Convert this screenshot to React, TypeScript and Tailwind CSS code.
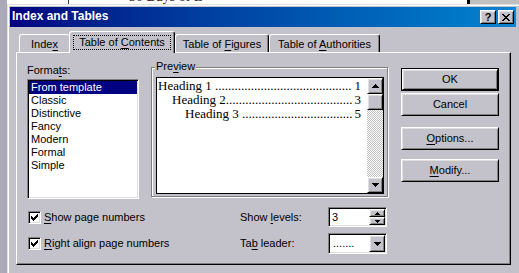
import React from "react";

const raised =
  "border border-t-white border-l-white border-r-black border-b-black shadow-[inset_1px_1px_0_#dfdfdf,inset_-1px_-1px_0_#808080]";
const sunken =
  "border border-t-[#808080] border-l-[#808080] border-b-white border-r-white shadow-[inset_1px_1px_0_#000,inset_-1px_-1px_0_#dfdfdf] p-[1px]";

function Px({ d, w, h }: { d: string; w: number; h: number }) {
  return (
    <svg width={w} height={h} viewBox={`0 0 ${w} ${h}`} shapeRendering="crispEdges" className="block">
      <path d={d} fill="#000" />
    </svg>
  );
}

const UP7 = "M3 0h1v1H3zM2 1h3v1H2zM1 2h5v1H1zM0 3h7v1H0z";
const DN7 = "M0 0h7v1H0zM1 1h5v1H1zM2 2h3v1H2zM3 3h1v1H3z";
const UP5 = "M2 0h1v1H2zM1 1h3v1H1zM0 2h5v1H0z";
const DN5 = "M0 0h5v1H0zM1 1h3v1H1zM2 2h1v1H2z";
const CHECK =
  "M6 0h1v1H6zM5 1h2v1H5zM0 2h1v1H0zM4 2h3v1H4zM0 3h2v1H0zM3 3h3v1H3zM0 4h5v1H0zM1 5h3v1H1zM2 6h1v1H2z";
const XMARK =
  "M0 0h2v1H0zM6 0h2v1H6zM1 1h2v1H1zM5 1h2v1H5zM2 2h4v1H2zM3 3h2v1H3zM2 4h4v1H2zM1 5h2v1H1zM5 5h2v1H5zM0 6h2v1H0zM6 6h2v1H6z";

function U({ children }: { children: React.ReactNode }) {
  return <span className="underline decoration-1 underline-offset-[2px]">{children}</span>;
}

function Tab({
  children,
  w,
  noRight,
}: {
  children: React.ReactNode;
  w: string;
  noRight?: boolean;
}) {
  return (
    <div
      className={`${w} h-[18px] shrink-0 flex items-center justify-center pt-[1px] rounded-t-[3px] border-t border-l border-t-white border-l-white ${
        noRight ? "" : "border-r border-r-black shadow-[inset_-1px_0_0_#808080]"
      }`}
    >
      <span className="whitespace-nowrap">{children}</span>
    </div>
  );
}

function Button({ children, def }: { children: React.ReactNode; def?: boolean }) {
  const inner = (
    <div className={`flex-1 flex items-center justify-center ${raised}`}>
      <span className="whitespace-nowrap">{children}</span>
    </div>
  );
  if (def) {
    return <div className="w-[98px] h-[23px] flex border border-black">{inner}</div>;
  }
  return <div className="w-[98px] h-[23px] flex">{inner}</div>;
}

function Checkbox() {
  return (
    <div className={`w-[13px] h-[13px] shrink-0 bg-white ${sunken} flex items-center justify-center`}>
      <Px d={CHECK} w={7} h={7} />
    </div>
  );
}

function Leader({ text, num, indent, dots }: { text: string; num: string; indent: string; dots: number }) {
  return (
    <div className={`flex justify-between h-[14px] ${indent}`}>
      <span className="whitespace-pre">{text + ".".repeat(dots)}</span>
      <span>{num}</span>
    </div>
  );
}

export default function App() {
  const formats = ["From template", "Classic", "Distinctive", "Fancy", "Modern", "Formal", "Simple"];
  return (
    <div className="w-[519px] h-[273px] overflow-hidden flex bg-[#aba8b8] font-['Liberation_Sans',Arial,sans-serif] text-[11px] leading-[13px] text-black select-none">
      <div className="w-[7px] shrink-0" />
      <div className="flex-1 flex flex-col min-w-0">
        {/* window behind */}
        <div className="h-[4px] shrink-0 bg-white flex overflow-hidden">
          <div className="w-[61px] shrink-0" />
          <div className="w-[1px] shrink-0 bg-[#404040]" />
          <div className="w-[60px] shrink-0" />
          <div className="-mt-[10px] whitespace-nowrap font-['Liberation_Serif',serif] text-[14px] leading-[14px] text-[#222]">
            30 Days of L
          </div>
          <div className="flex-1" />
          <div className="w-[3px] shrink-0 bg-black" />
          <div className="w-[49px] shrink-0 bg-[#c0c0c0]" />
        </div>

        {/* dialog */}
        <div className="flex-1 flex flex-col border-t border-l border-[#dfdfdf] bg-[#c3c1c9]">
          <div className="flex-1 flex flex-col border-t border-l border-white pt-[1px] pl-[1px] pr-[3px]">
            {/* title bar */}
            <div className="h-[20px] shrink-0 flex items-center pl-[2px] pr-[2px] bg-gradient-to-r from-[#000080] to-[#1084d0]">
              <span className="text-white font-bold text-[12px] leading-[14px] -mt-[3px]">Index and Tables</span>
              <div className="flex-1" />
              <div className={`w-[16px] h-[14px] bg-[#c3c1c9] ${raised} flex items-center justify-center`}>
                <span className="font-bold text-[11px] leading-[11px]">?</span>
              </div>
              <div className={`ml-[2px] w-[16px] h-[14px] bg-[#c3c1c9] ${raised} flex items-center justify-center`}>
                <Px d={XMARK} w={8} h={7} />
              </div>
            </div>

            {/* body */}
            <div className="mt-[4px] pl-[6px] flex flex-col">
              {/* tabs */}
              <div className="h-[21px] flex items-end pl-[3px]">
                <Tab w="w-[50px]" noRight>
                  Inde<U>x</U>
                </Tab>
                <div className="relative z-10 w-[106px] h-[22px] -mb-[1px] shrink-0 bg-[#c3c1c9] rounded-t-[3px] border-t border-l border-r border-t-white border-l-white border-r-black shadow-[inset_-1px_0_0_#808080] flex justify-center pt-[3px]">
                  <div className="w-[98px] h-[15px] border border-dotted border-black flex items-center justify-center">
                    <span className="whitespace-nowrap">
                      Table of <U>C</U>ontents
                    </span>
                  </div>
                </div>
                <Tab w="w-[94px]">
                  Table of <U>F</U>igures
                </Tab>
                <Tab w="w-[111px]">
                  Table of <U>A</U>uthorities
                </Tab>
              </div>

              {/* panel */}
              <div className="w-[495px] h-[213px] border-t border-l border-t-white border-l-white border-r border-b border-r-black border-b-black shadow-[inset_-1px_-1px_0_#808080] pl-[10px] pt-[11px] flex flex-col">
                <div className="flex items-start">
                  {/* formats */}
                  <div className="w-[112px] shrink-0 flex flex-col">
                    <div className="h-[13px] mb-[2px]">
                      <span>
                        Forma<U>t</U>s:
                      </span>
                    </div>
                    <div className={`h-[120px] bg-white ${sunken}`}>
                      {formats.map((f, i) => (
                        <div
                          key={f}
                          className={`h-[13px] pl-[2px] whitespace-nowrap ${
                            i === 0 ? "bg-[#000080] text-white" : ""
                          }`}
                        >
                          {f}
                        </div>
                      ))}
                    </div>
                  </div>

                  {/* preview */}
                  <div className="ml-[12px] mt-[3px] relative w-[237px] h-[130px] shrink-0 border border-[#808080] shadow-[1px_1px_0_#fff,inset_1px_1px_0_#fff] pl-[4px] pt-[9px]">
                    <div className="absolute left-[3px] -top-[8px] px-[1px] bg-[#c3c1c9] leading-[13px]">
                      Pre<U>v</U>iew
                    </div>
                    <div className="w-[228px] h-[117px] bg-white border border-black flex">
                      <div className="flex-1 min-w-0 pl-[1px] pr-[6px] pt-[1px] font-['Liberation_Serif','Times_New_Roman',serif] text-[13px] leading-[14px]">
                        <Leader text="Heading 1 " num="1" indent="" dots={42} />
                        <Leader text="Heading 2" num="3" indent="pl-[14px]" dots={39} />
                        <Leader text="Heading 3 " num="5" indent="pl-[27px]" dots={34} />
                      </div>
                      <div className="w-[16px] shrink-0 flex flex-col">
                        <div className={`h-[16px] bg-[#c3c1c9] ${raised} flex items-center justify-center`}>
                          <Px d={UP7} w={7} h={4} />
                        </div>
                        <div className={`h-[16px] bg-[#c3c1c9] ${raised}`} />
                        <div className="flex-1 bg-[image:repeating-conic-gradient(#c0c0c0_0%_25%,#ffffff_0%_50%)] bg-[length:2px_2px]" />
                        <div className={`h-[16px] bg-[#c3c1c9] ${raised} flex items-center justify-center`}>
                          <Px d={DN7} w={7} h={4} />
                        </div>
                      </div>
                    </div>
                  </div>

                  {/* buttons */}
                  <div className="ml-[13px] mt-[4px] flex flex-col">
                    <Button def>OK</Button>
                    <div className="mt-[2px]">
                      <Button>Cancel</Button>
                    </div>
                    <div className="mt-[11px]">
                      <Button>
                        <U>O</U>ptions...
                      </Button>
                    </div>
                    <div className="mt-[9px]">
                      <Button>
                        <U>M</U>odify...
                      </Button>
                    </div>
                  </div>
                </div>

                {/* bottom options */}
                <div className="mt-[8px] grid grid-cols-[213px_88px_59px] grid-rows-[20px_21px] gap-y-[6px]">
                  <div className="flex items-center pl-[1px]">
                    <Checkbox />
                    <span className="ml-[3px] whitespace-nowrap">
                      <U>S</U>how page numbers
                    </span>
                  </div>
                  <div className="flex items-center">
                    <span className="whitespace-nowrap">
                      Show <U>l</U>evels:
                    </span>
                  </div>
                  <div className={`bg-white ${sunken} flex`}>
                    <div className="flex-1 pl-[2px] flex items-center">3</div>
                    <div className="w-[16px] flex flex-col">
                      <div className={`h-[8px] bg-[#c3c1c9] ${raised} flex items-center justify-center`}>
                        <Px d={UP5} w={5} h={3} />
                      </div>
                      <div className={`h-[8px] bg-[#c3c1c9] ${raised} flex items-center justify-center`}>
                        <Px d={DN5} w={5} h={3} />
                      </div>
                    </div>
                  </div>

                  <div className="flex items-center pl-[1px]">
                    <Checkbox />
                    <span className="ml-[3px] whitespace-nowrap">
                      <U>R</U>ight align page numbers
                    </span>
                  </div>
                  <div className="flex items-center">
                    <span className="whitespace-nowrap">
                      Ta<U>b</U> leader:
                    </span>
                  </div>
                  <div className={`bg-white ${sunken} flex`}>
                    <div className="flex-1 pl-[3px] flex items-center">.......</div>
                    <div className={`w-[16px] bg-[#c3c1c9] ${raised} flex items-center justify-center`}>
                      <Px d={DN7} w={7} h={4} />
                    </div>
                  </div>
                </div>
              </div>
            </div>
          </div>
        </div>
      </div>
    </div>
  );
}
